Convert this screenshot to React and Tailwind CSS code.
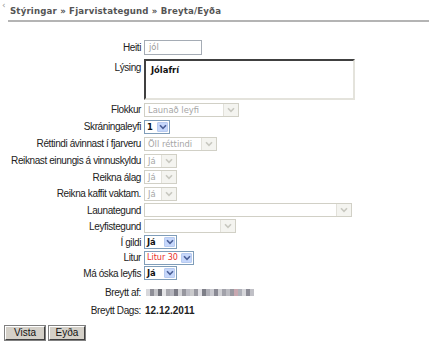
import React from 'react';

const label = "font-['Liberation_Sans',Arial,sans-serif] text-[10px] tracking-[-0.4px] text-[#222] whitespace-nowrap";
const small = "font-['DejaVu_Sans',Verdana,sans-serif] text-[8.4px]";

function Chevron({ color }) {
  return (
    <svg width="8" height="6" viewBox="0 0 8 6">
      <path d="M1 1.2 L4 4.4 L7 1.2" fill="none" stroke={color} strokeWidth="1.6" />
    </svg>
  );
}

function Select({ value, width, disabled, red }) {
  if (disabled) {
    return (
      <div
        className="flex h-[14px] items-stretch border border-[#d1d0c6] bg-white"
        style={{ width }}
      >
        <span className={`${small} flex-1 overflow-hidden whitespace-nowrap pl-[3px] leading-[12px] text-[#a6a6a6]`}>{value}</span>
        <span className="flex w-[15px] items-center justify-center border-l border-[#e2e1da] bg-[#f4f4f0]">
          <Chevron color="#c8c8c0" />
        </span>
      </div>
    );
  }
  return (
    <div
      className="flex h-[14px] items-stretch border border-[#7f9db9] bg-white"
      style={{ width }}
    >
      <span
        className={`${small} flex-1 overflow-hidden whitespace-nowrap pl-[2px] leading-[12px] ${red ? 'text-[8px] text-[#e8302a]' : 'text-[#111] font-bold'}`}
      >
        {value}
      </span>
      <span className="m-[1px] flex w-[11px] items-center justify-center rounded-[1px] border border-[#b8cbf0] bg-[#c6d7fb]">
        <Chevron color="#4a5f97" />
      </span>
    </div>
  );
}

function Row({ name, h, children }) {
  return (
    <div className={`flex items-center ${h}`}>
      <div className={`${label} w-[141px] shrink-0 text-right`}>{name}</div>
      <div className="ml-[3px] flex items-center">{children}</div>
    </div>
  );
}

const blur = ['#d8d8dc', '#8e8e96', '#c4c4c8', '#6f7078', '#e4e4e6', '#a8a8ae', '#b6b6be', '#7c7c86', '#d2d2d6', '#96969e', '#bcbcc4', '#cacacc', '#9a9aa2', '#e0dfe4', '#7e7f88', '#b0b0b8', '#c9c9cf', '#8a8a94', '#d0d0d4', '#a2a2aa', '#bcbcc2', '#9898a0', '#c8a8b0', '#aeb0b8', '#d6d6da', '#8c8c96', '#c0c0c6'];

export default function App() {
  return (
    <div className="relative h-[352px] w-[429px] overflow-hidden bg-white">
      <div className="absolute left-[2px] top-[-1px] font-['DejaVu_Sans',sans-serif] text-[9px] text-[#999]">‹</div>
      <div className="ml-[8px] pt-[6px]">
        <div className="border-b-2 border-[#b4b4b4] pb-[3px] pl-[2px] font-['DejaVu_Sans',Verdana,sans-serif] text-[8.6px] font-bold leading-[11px] tracking-[0.18px] text-[#555]">
          Stýringar » Fjarvistategund » Breyta/Eyða
        </div>
      </div>

      <div className="mt-[17px] flex flex-col">
        <Row name="Heiti" h="h-[16px]">
          <div className={`${small} h-[15px] w-[58px] border border-[#a5acb5] pl-[4px] leading-[13px] text-[#9a9a9a]`}>jól</div>
        </Row>
        <div className="mt-[4px] flex h-[42px] items-start">
          <div className={`${label} w-[141px] shrink-0 pt-[1px] text-right`}>Lýsing</div>
          <div className={`${small} ml-[3px] h-[41px] w-[211px] border-2 border-b-[#e4e3dc] border-l-[#404040] border-r-[#e4e3dc] border-t-[#404040] pl-[5px] pt-[3px] font-bold text-[#111]`}>
            Jólafrí
          </div>
        </div>
        <Row name="Flokkur" h="h-[17px]">
          <Select value="Launað leyfi" width={95} disabled />
        </Row>
        <Row name="Skráningaleyfi" h="h-[17px]">
          <Select value="1" width={26} />
        </Row>
        <Row name="Réttindi ávinnast í fjarveru" h="h-[17px]">
          <Select value="Öll réttindi" width={73} disabled />
        </Row>
        <Row name="Reiknast einungis á vinnuskyldu" h="h-[17px]">
          <Select value="Já" width={33} disabled />
        </Row>
        <Row name="Reikna álag" h="h-[16px]">
          <Select value="Já" width={33} disabled />
        </Row>
        <Row name="Reikna kaffit vaktam." h="h-[17px]">
          <Select value="Já" width={33} disabled />
        </Row>
        <Row name="Launategund" h="h-[16px]">
          <Select value="" width={208} disabled />
        </Row>
        <Row name="Leyfistegund" h="h-[16px]">
          <Select value="" width={92} disabled />
        </Row>
        <Row name="Í gildi" h="h-[16px]">
          <Select value="Já" width={33} />
        </Row>
        <Row name="Litur" h="h-[15px]">
          <Select value="Litur 30" width={50} red />
        </Row>
        <Row name="Má óska leyfis" h="h-[16px]">
          <Select value="Já" width={33} />
        </Row>
        <Row name="Breytt af:" h="h-[19px] mt-[2px]">
          <div className="ml-[2px] flex h-[7px]">
            {blur.map((c, i) => (
              <span key={i} className="h-[7px] w-[4px]" style={{ backgroundColor: c }} />
            ))}
          </div>
        </Row>
        <Row name="Breytt Dags:" h="h-[17px]">
          <span className={`${label} ml-[1px] font-bold tracking-normal text-[#111]`}>12.12.2011</span>
        </Row>
        <div className="ml-[5px] mt-[7px] flex gap-[2px]">
          <button className="h-[14px] w-[40px] border border-b-[#404040] border-l-[#fff] border-r-[#404040] border-t-[#fff] bg-[#d4d0c8] font-['Liberation_Sans',Arial,sans-serif] text-[10px] leading-[12px] text-[#111] shadow-[0_0_0_1px_#808080]">
            Vista
          </button>
          <button className="ml-[2px] h-[14px] w-[36px] border border-b-[#404040] border-l-[#fff] border-r-[#404040] border-t-[#fff] bg-[#d4d0c8] font-['Liberation_Sans',Arial,sans-serif] text-[10px] leading-[12px] text-[#111] shadow-[0_0_0_1px_#808080]">
            Eyða
          </button>
        </div>
      </div>
    </div>
  );
}
